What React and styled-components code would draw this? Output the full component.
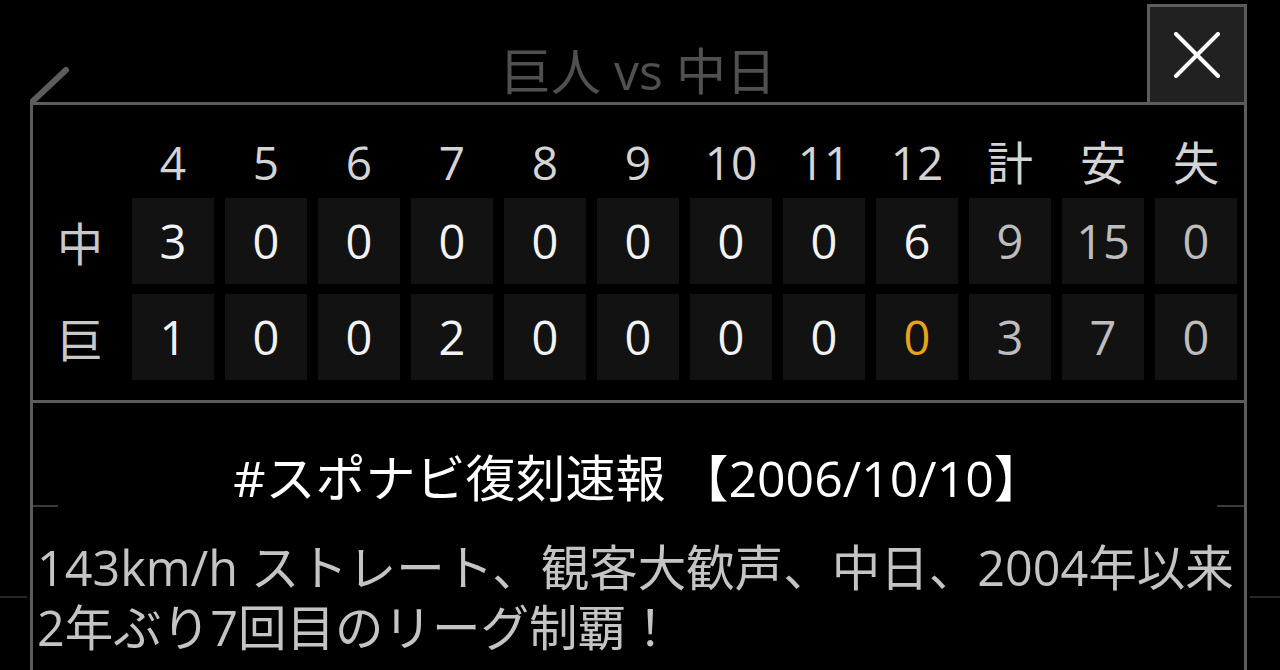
import React from "react";
import styled, { createGlobalStyle } from "styled-components";

const GlobalStyle = createGlobalStyle`
  html, body {
    margin: 0;
    padding: 0;
    background: #000000;
  }
  body {
    font-family: "Open Sans", "Noto Sans CJK JP", sans-serif;
    overflow: hidden;
  }
`;

const columns = ["4", "5", "6", "7", "8", "9", "10", "11", "12", "計", "安", "失"];

const teams = [
  { name: "中", runs: ["3", "0", "0", "0", "0", "0", "0", "0", "6"], total: ["9", "15", "0"] },
  { name: "巨", runs: ["1", "0", "0", "2", "0", "0", "0", "0", "0"], total: ["3", "7", "0"], live: 8 },
];

function App() {
  return (
    <Page>
      <GlobalStyle />
      <Header>
        <Corner>
          <svg width="40" height="40" viewBox="0 0 40 40">
            <line x1="2" y1="38" x2="36" y2="6" stroke="#5c5c5c" strokeWidth="6" strokeLinecap="round" />
          </svg>
        </Corner>
        <Title>巨人 vs 中日</Title>
        <CloseCell>
          <CloseButton aria-label="close">
            <svg width="46" height="46" viewBox="0 0 46 46">
              <path d="M2 2 L44 44 M44 2 L2 44" stroke="#ffffff" strokeWidth="4" strokeLinecap="round" />
            </svg>
          </CloseButton>
        </CloseCell>
      </Header>
      <Panel>
        <Board>
          <HeadCell />
          {columns.map((c) => (
            <HeadCell key={c}>{c}</HeadCell>
          ))}
          {teams.map((t) => (
            <React.Fragment key={t.name}>
              <TeamLabel>{t.name}</TeamLabel>
              {t.runs.map((r, i) => (
                <Score key={i} $live={t.live === i}>
                  {r}
                </Score>
              ))}
              {t.total.map((r, i) => (
                <Score key={"t" + i} $total>
                  {r}
                </Score>
              ))}
            </React.Fragment>
          ))}
        </Board>
        <News>
          <Headline>#スポナビ復刻速報 【2006/10/10】</Headline>
          <Body>143km/h ストレート、観客大歓声、中日、2004年以来2年ぶり7回目のリーグ制覇！</Body>
        </News>
      </Panel>
    </Page>
  );
}

export default App;

const Page = styled.div`
  position: relative;
  width: 1280px;
  height: 670px;
  overflow: hidden;
  background: #000000;

  &::before,
  &::after {
    content: "";
    position: absolute;
    top: 596px;
    height: 2px;
    background: #262626;
  }
  &::before {
    left: 0;
    width: 27px;
  }
  &::after {
    left: 1250px;
    width: 30px;
  }
`;

const Header = styled.div`
  display: grid;
  grid-template-columns: 1fr auto 1fr;
  margin-left: 30px;
  width: 1217px;
  height: 102px;
`;

const Corner = styled.div`
  display: flex;
  align-items: flex-end;
  margin-bottom: -2px;
`;

const Title = styled.div`
  align-self: end;
  margin-bottom: 6px;
  font-size: 50px;
  line-height: 50px;
  color: #505050;
  white-space: nowrap;
`;

const CloseCell = styled.div`
  display: flex;
  justify-content: flex-end;
`;

const CloseButton = styled.div`
  box-sizing: border-box;
  margin-top: 4px;
  width: 100px;
  height: 98px;
  display: flex;
  align-items: center;
  justify-content: center;
  background: #212121;
  border: 3px solid #5c5c5c;
  border-bottom: none;
`;

const Panel = styled.div`
  box-sizing: border-box;
  margin-left: 30px;
  width: 1217px;
  height: 600px;
  border: 3px solid #5c5c5c;
  border-bottom: none;
`;

const Board = styled.div`
  display: grid;
  grid-template-columns: 88px repeat(12, 82px);
  grid-template-rows: 83px 86px 86px;
  column-gap: 11px;
  row-gap: 10px;
  padding-bottom: 20px;
  border-bottom: 3px solid #5c5c5c;
`;

const HeadCell = styled.div`
  display: flex;
  align-items: flex-end;
  justify-content: center;
  padding-bottom: 3px;
  font-size: 46px;
  line-height: 46px;
  color: #d4d4d4;
`;

const TeamLabel = styled.div`
  display: flex;
  align-items: center;
  justify-content: center;
  padding-left: 6px;
  font-size: 46px;
  color: #c8c8c8;
`;

const Score = styled.div`
  display: flex;
  align-items: center;
  justify-content: center;
  background: #121212;
  font-size: 47px;
  line-height: 1;
  color: ${(p) => (p.$live ? "#e9a21c" : p.$total ? "#bdbdbd" : "#f2f2f2")};
`;

const News = styled.div`
  position: relative;
  padding-top: 45px;

  &::before,
  &::after {
    content: "";
    position: absolute;
    top: 102px;
    height: 2px;
    background: #3a3a3a;
  }
  &::before {
    left: 0;
    width: 25px;
  }
  &::after {
    right: 0;
    width: 27px;
  }
`;

const Headline = styled.div`
  text-align: center;
  font-size: 50px;
  line-height: 60px;
  color: #ffffff;
  white-space: nowrap;
`;

const Body = styled.div`
  margin-top: 29px;
  padding-left: 4px;
  font-size: 48.5px;
  line-height: 60px;
  color: #c4c4c4;
`;
